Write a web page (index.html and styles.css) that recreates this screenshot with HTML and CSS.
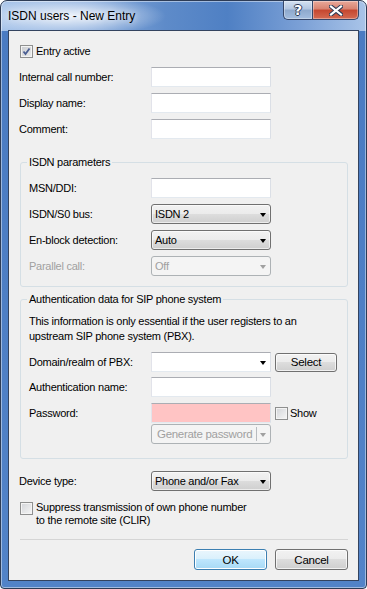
FILE: index.html
```html
<!DOCTYPE html>
<html>
<head>
<meta charset="utf-8">
<link rel="stylesheet" href="styles.css">
</head>
<body>
<div class="window">
  <div class="titlebar">
    <span class="title">ISDN users - New Entry</span>
    <div class="caption">
      <div class="cap help">?</div>
      <div class="cap close">
        <svg width="14" height="11" viewBox="0 0 14 11"><path d="M2 1.5 L12 9.5 M12 1.5 L2 9.5" stroke="#2c3a55" stroke-width="4.2" stroke-linecap="square"/><path d="M2 1.5 L12 9.5 M12 1.5 L2 9.5" stroke="#fff" stroke-width="2.2" stroke-linecap="square"/></svg>
      </div>
    </div>
  </div>
  <div class="client">
    <div class="checkrow top-check">
      <span class="cbx checked"><svg width="11" height="11" viewBox="0 0 11 11"><path d="M2.5 5.5 L4.5 8 L8.5 2.5" fill="none" stroke="#4a5e93" stroke-width="1.8"/></svg></span>
      <span>Entry active</span>
    </div>
    <div class="rows main-rows">
      <div class="row"><span class="lbl">Internal call number:</span><span class="tb"></span></div>
      <div class="row"><span class="lbl">Display name:</span><span class="tb"></span></div>
      <div class="row"><span class="lbl">Comment:</span><span class="tb"></span></div>
    </div>

    <div class="group g1">
      <div class="legend">ISDN parameters</div>
      <div class="rows group-rows">
        <div class="row"><span class="lbl glbl">MSN/DDI:</span><span class="tb"></span></div>
        <div class="row"><span class="lbl glbl">ISDN/S0 bus:</span><span class="dd"><span class="ddtext">ISDN 2</span><span class="arrow"></span></span></div>
        <div class="row"><span class="lbl glbl">En-block detection:</span><span class="dd"><span class="ddtext">Auto</span><span class="arrow"></span></span></div>
        <div class="row"><span class="lbl glbl disabled">Parallel call:</span><span class="dd dis"><span class="ddtext">Off</span><span class="arrow"></span></span></div>
      </div>
    </div>

    <div class="group g2">
      <div class="legend">Authentication data for SIP phone system</div>
      <div class="info">This information is only essential if the user registers to an<br>upstream SIP phone system (PBX).</div>
      <div class="auth-rows">
        <div class="row"><span class="lbl glbl">Domain/realm of PBX:</span><span class="combo"><span class="arrow"></span></span><span class="btn select-btn">Select</span></div>
        <div class="row r-auth"><span class="lbl glbl">Authentication name:</span><span class="tb"></span></div>
        <div class="row r-pwd"><span class="lbl glbl">Password:</span><span class="tb pink"></span><span class="cbx show-cbx"></span><span class="show-txt">Show</span></div>
        <div class="row r-gen"><span class="lbl glbl"></span><span class="split dis"><span class="ddtext">Generate password</span><span class="divider"></span><span class="arrow"></span></span></div>
      </div>
    </div>

    <div class="row device-row"><span class="lbl">Device type:</span><span class="dd"><span class="ddtext">Phone and/or Fax</span><span class="arrow"></span></span></div>

    <div class="checkrow clir">
      <span class="cbx"></span>
      <span class="clir-text">Suppress transmission of own phone number<br>to the remote site (CLIR)</span>
    </div>

    <div class="separator"></div>

    <div class="buttons">
      <span class="btn default">OK</span>
      <span class="btn">Cancel</span>
    </div>
  </div>
</div>
</body>
</html>
```
FILE: styles.css
```css
html, body {
  margin: 0;
  padding: 0;
  background: #ffffff;
}
body {
  font-family: "Liberation Sans", Arial, sans-serif;
  font-size: 11px;
  letter-spacing: -0.25px;
  color: #000;
}
.window {
  width: 367px;
  height: 589px;
  box-sizing: border-box;
  border: 1px solid #2d3c56;
  border-radius: 7px 7px 4px 4px;
  padding: 0 7px 7px 7px;
  display: flex;
  flex-direction: column;
  background:
    radial-gradient(ellipse 95px 20px at 70px 15px, rgba(255,255,255,0.85), rgba(255,255,255,0) 100%),
    linear-gradient(to bottom, rgba(0,0,0,0) 0, rgba(0,0,0,0) 30px, #4a7bc2 30px, #5283c8 100%),
    linear-gradient(to right, #a6c3e9 0%, #86aadc 25%, #5e8bc9 45%, #4f80c4 62%, #7ba0d6 82%, #a9c4e8 100%);
  box-shadow: inset 0 0 0 1px rgba(255,255,255,0.45);
}
.titlebar {
  height: 29px;
  display: flex;
  align-items: flex-start;
  flex: none;
}
.title {
  align-self: center;
  font-size: 12px;
  letter-spacing: 0;
  color: #000;
  margin-top: 1px;
  text-shadow: 0 0 6px rgba(255,255,255,0.9);
}
.caption {
  margin-left: auto;
  display: flex;
}
.cap {
  height: 19px;
  box-sizing: border-box;
  border: 1px solid #36476a;
  border-top: none;
  display: flex;
  align-items: center;
  justify-content: center;
  box-shadow: inset 0 0 0 1px rgba(255,255,255,0.35);
}
.help {
  width: 29px;
  border-radius: 0 0 0 5px;
  border-right: none;
  background: linear-gradient(#d4e1f2 0%, #b2c6e1 45%, #8ea9cd 50%, #a3bddf 100%);
  color: #fff;
  font-weight: bold;
  font-size: 14px;
  letter-spacing: 0;
  font-family: "DejaVu Sans", sans-serif;
  text-shadow: 1px 0 0 #2c3a55, -1px 0 0 #2c3a55, 0 1px 0 #2c3a55, 0 -1px 0 #2c3a55;
}
.close {
  width: 47px;
  border-radius: 0 0 5px 0;
  background: linear-gradient(#e9a99a 0%, #d88270 45%, #c5462f 50%, #d46a52 100%);
}
.client {
  flex: 1;
  box-sizing: border-box;
  border: 1px solid #33435f;
  background: #f0f0f0;
  padding: 10px 10px 0 10px;
  display: flex;
  flex-direction: column;
}
.checkrow {
  display: flex;
  align-items: center;
}
.top-check {
  height: 20px;
}
.cbx {
  width: 13px;
  height: 13px;
  box-sizing: border-box;
  border: 1px solid #8e8f8f;
  background: linear-gradient(135deg, #d2d4d8 0%, #f6f6f6 100%);
  box-shadow: inset 0 0 0 1px #f4f4f4;
  display: inline-flex;
  align-items: center;
  justify-content: center;
  flex: none;
}
.top-check .cbx {
  margin-left: 1px;
  margin-right: 3px;
  background: linear-gradient(135deg, #c9cbd0 0%, #ececec 100%);
}
.rows {
  display: flex;
  flex-direction: column;
  gap: 6px;
}
.main-rows {
  margin-top: 6px;
}
.row {
  display: flex;
  align-items: center;
  height: 20px;
}
.lbl {
  width: 132px;
  flex: none;
}
.glbl {
  width: 122px;
}
.disabled {
  color: #a0a0a0;
}
.tb {
  width: 120px;
  height: 20px;
  box-sizing: border-box;
  border: 1px solid;
  border-color: #abadb3 #dbdfe6 #e3e9ef #e2e3ea;
  background: #fff;
  flex: none;
}
.tb.pink {
  background: #ffc4c4;
  border-color: #abadb3 #dbdfe6 #e3e9ef #e2e3ea;
}
.dd, .combo, .split {
  width: 120px;
  height: 20px;
  box-sizing: border-box;
  display: flex;
  align-items: center;
  flex: none;
}
.dd {
  border: 1px solid #707070;
  border-radius: 3px;
  background: linear-gradient(#f2f2f2 0%, #ebebeb 50%, #dddddd 50%, #cfcfcf 100%);
  padding-left: 3px;
  box-shadow: inset 0 0 0 1px rgba(255,255,255,0.6);
}
.dd.dis {
  border-color: #adb2b5;
  background: #f4f4f4;
  box-shadow: none;
  color: #a0a0a0;
}
.ddtext {
  flex: 1;
  white-space: nowrap;
}
.arrow {
  width: 0;
  height: 0;
  border-left: 3.5px solid transparent;
  border-right: 3.5px solid transparent;
  border-top: 4px solid #000;
  margin-right: 4px;
  margin-top: 1px;
  flex: none;
}
.dis .arrow {
  border-top-color: #a0a0a0;
}
.combo {
  border: 1px solid;
  border-color: #abadb3 #dbdfe6 #e3e9ef #e2e3ea;
  background: #fff;
  justify-content: flex-end;
}
.split {
  border: 1px solid #adb2b5;
  border-radius: 3px;
  background: #f4f4f4;
  color: #a0a0a0;
  padding-left: 5px;
  font-size: 11.5px;
  letter-spacing: -0.3px;
}
.divider {
  width: 1px;
  height: 14px;
  background: #b8bcc0;
  margin-right: 3px;
  flex: none;
}
.btn {
  box-sizing: border-box;
  height: 21px;
  border: 1px solid #707070;
  border-radius: 3px;
  background: linear-gradient(#f2f2f2 0%, #ebebeb 50%, #dddddd 50%, #cfcfcf 100%);
  box-shadow: inset 0 0 0 1px rgba(255,255,255,0.7);
  display: flex;
  align-items: center;
  justify-content: center;
  flex: none;
  font-size: 11.5px;
}
.select-btn {
  width: 62px;
  height: 19px;
  margin-left: 4px;
}
.show-cbx {
  margin-left: 4px;
  margin-right: 2px;
}
.g1, .g2 {
  border: 1px solid #d5dfe5;
  border-radius: 3px;
  margin-left: 1px;
  padding: 0 8px 10px 8px;
}
.g1 {
  margin-top: 23px;
}
.g2 {
  margin-top: 12px;
  padding-bottom: 14px;
}
.legend {
  display: table;
  margin: -8px 0 0 -2px;
  padding: 0 2px;
  background: #f0f0f0;
  line-height: 14px;
}
.group-rows {
  margin-top: 9px;
}
.info {
  margin-top: 8px;
  line-height: 15px;
}
.auth-rows {
  margin-top: 8px;
  display: flex;
  flex-direction: column;
}
.r-auth { margin-top: 5px; }
.r-pwd { margin-top: 6px; }
.r-gen { margin-top: 1px; }
.device-row {
  margin-top: 12px;
}
.clir {
  margin-top: 10px;
  align-items: flex-start;
}
.clir .cbx {
  margin-left: 1px;
  margin-right: 3px;
  margin-top: 1px;
}
.clir-text {
  line-height: 13px;
}
.separator {
  margin-top: 12px;
  margin-left: 1px;
  height: 1px;
  background: #d5d5d5;
}
.buttons {
  margin-top: 9px;
  display: flex;
  justify-content: flex-end;
  gap: 8px;
}
.buttons .btn {
  width: 73px;
}
.btn.default {
  border-color: #3c7fb1;
  background: linear-gradient(#eaf6fd 0%, #d9f0fc 50%, #bee6fd 50%, #a7d9f5 100%);
  box-shadow: inset 0 0 0 1px #ffffff;
}
```
